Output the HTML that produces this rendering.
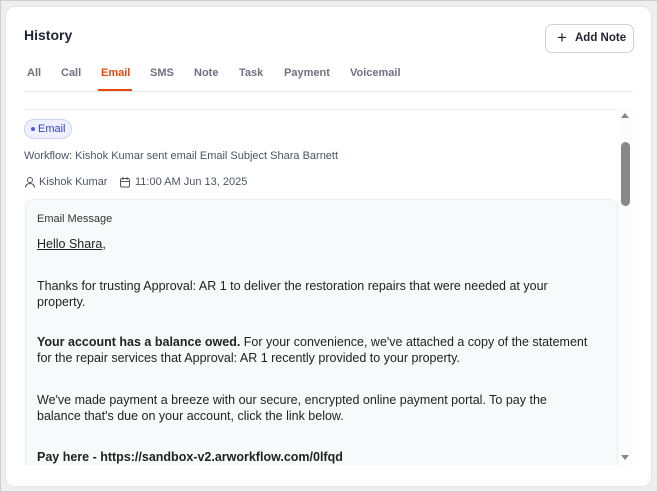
<!DOCTYPE html>
<html><head><meta charset="utf-8"><style>
*{box-sizing:border-box;margin:0;padding:0}
body{width:658px;height:492px;background:#efefef;font-family:"Liberation Sans",sans-serif;position:relative;overflow:hidden}
.frame{position:absolute;left:0;top:0;width:658px;height:492px;border:1px solid #cfcfcf}
.card{position:absolute;left:5px;top:6px;width:647px;height:481px;background:#fff;border:1px solid #e3e5e8;border-radius:10px}
.abs{position:absolute}
h1{position:absolute;left:24px;top:27px;font-size:14px;font-weight:bold;color:#1f2430}
.btn{position:absolute;left:545px;top:24px;width:89px;height:29px;border:1px solid #cfd3d9;border-radius:7px;font-size:11.5px;color:#1f2430;font-weight:bold}
.tabs{position:absolute;left:24px;top:67px;font-size:11px;color:#6b7280;font-weight:bold}
.tabs span{position:absolute;white-space:nowrap}
.t{font-size:11px;color:#4b5563;position:absolute;white-space:nowrap}
.box{position:absolute;left:25px;top:199px;width:593px;height:280px;background:#f8f9fb;border:1px solid #eceef1;border-radius:8px}
.p{position:absolute;left:37px;font-size:12.5px;color:#222;line-height:16px;width:556px}
</style></head><body>
<div class="frame"></div>
<div class="card"></div>
<h1>History</h1>
<div class="btn"><span class="abs" style="left:11px;top:3px;font-size:17px;font-weight:normal">+</span><span class="abs" style="left:29px;top:7px">Add Note</span></div>
<div class="tabs">
<span style="left:3px">All</span><span style="left:37px">Call</span><span style="left:77px;color:#e8470e">Email</span><span style="left:126px">SMS</span><span style="left:170px">Note</span><span style="left:215px">Task</span><span style="left:260px">Payment</span><span style="left:326px">Voicemail</span>
</div>
<div class="abs" style="left:98px;top:89px;width:34px;height:2px;background:#e8470e"></div>
<div class="abs" style="left:24px;top:91px;width:609px;height:1px;background:#e3e5e8"></div>
<div class="abs" style="left:24px;top:109px;width:593px;height:1px;background:#eef0f2"></div>
<div class="abs" style="left:24px;top:119px;width:48px;height:20px;background:#eef0fd;border:1px solid #cdd3f6;border-radius:10px;font-size:11px;color:#3b43c4"><span class="abs" style="left:6px;top:7px;width:4px;height:4px;border-radius:50%;background:#4f58e0"></span><span class="abs" style="left:13px;top:3px">Email</span></div>
<div class="t" style="left:24px;top:150px">Workflow: Kishok Kumar sent email Email Subject Shara Barnett</div>
<svg class="abs" style="left:24px;top:176px" width="12" height="12" viewBox="0 0 12 12" fill="none" stroke="#555" stroke-width="1"><circle cx="6" cy="4" r="2.5"/><path d="M1.5 11.5c0-2.5 2-4 4.5-4s4.5 1.5 4.5 4"/></svg>
<div class="t" style="left:39px;top:176px">Kishok Kumar</div>
<svg class="abs" style="left:119px;top:176px" width="12" height="12" viewBox="0 0 12 12" fill="none" stroke="#555" stroke-width="1"><rect x="1.5" y="2.5" width="9" height="8.5" rx="1.5"/><path d="M1.5 5.5h9M4 1v3M8 1v3"/></svg>
<div class="t" style="left:135px;top:176px">11:00 AM Jun 13, 2025</div>
<div class="abs" style="left:24px;top:199px;width:594px;height:266px;overflow:hidden"><div class="box" style="left:1px;top:0"></div></div>
<div class="t" style="left:37px;top:213px;color:#333">Email Message</div>
<div class="p" style="top:236px"><u>Hello Shara</u>,</div>
<div class="p" style="top:278px">Thanks for trusting Approval: AR 1 to deliver the restoration repairs that were needed at your property.</div>
<div class="p" style="top:334px"><b>Your account has a balance owed.</b> For your convenience, we've attached a copy of the statement for the repair services that Approval: AR 1 recently provided to your property.</div>
<div class="p" style="top:392px">We've made payment a breeze with our secure, encrypted online payment portal. To pay the balance that's due on your account, click the link below.</div>
<div class="p" style="top:449px"><b>Pay here - https://sandbox-v2.arworkflow.com/0lfqd</b></div>
<div class="abs" style="left:618px;top:109px;width:15px;height:356px;background:#fcfcfc"></div>
<div class="abs" style="left:621px;top:113px;width:0;height:0;border-left:4px solid transparent;border-right:4px solid transparent;border-bottom:5px solid #888"></div>
<div class="abs" style="left:621px;top:142px;width:9px;height:64px;border-radius:5px;background:#888"></div>
<div class="abs" style="left:621px;top:455px;width:0;height:0;border-left:4px solid transparent;border-right:4px solid transparent;border-top:5px solid #888"></div>
</body></html>
